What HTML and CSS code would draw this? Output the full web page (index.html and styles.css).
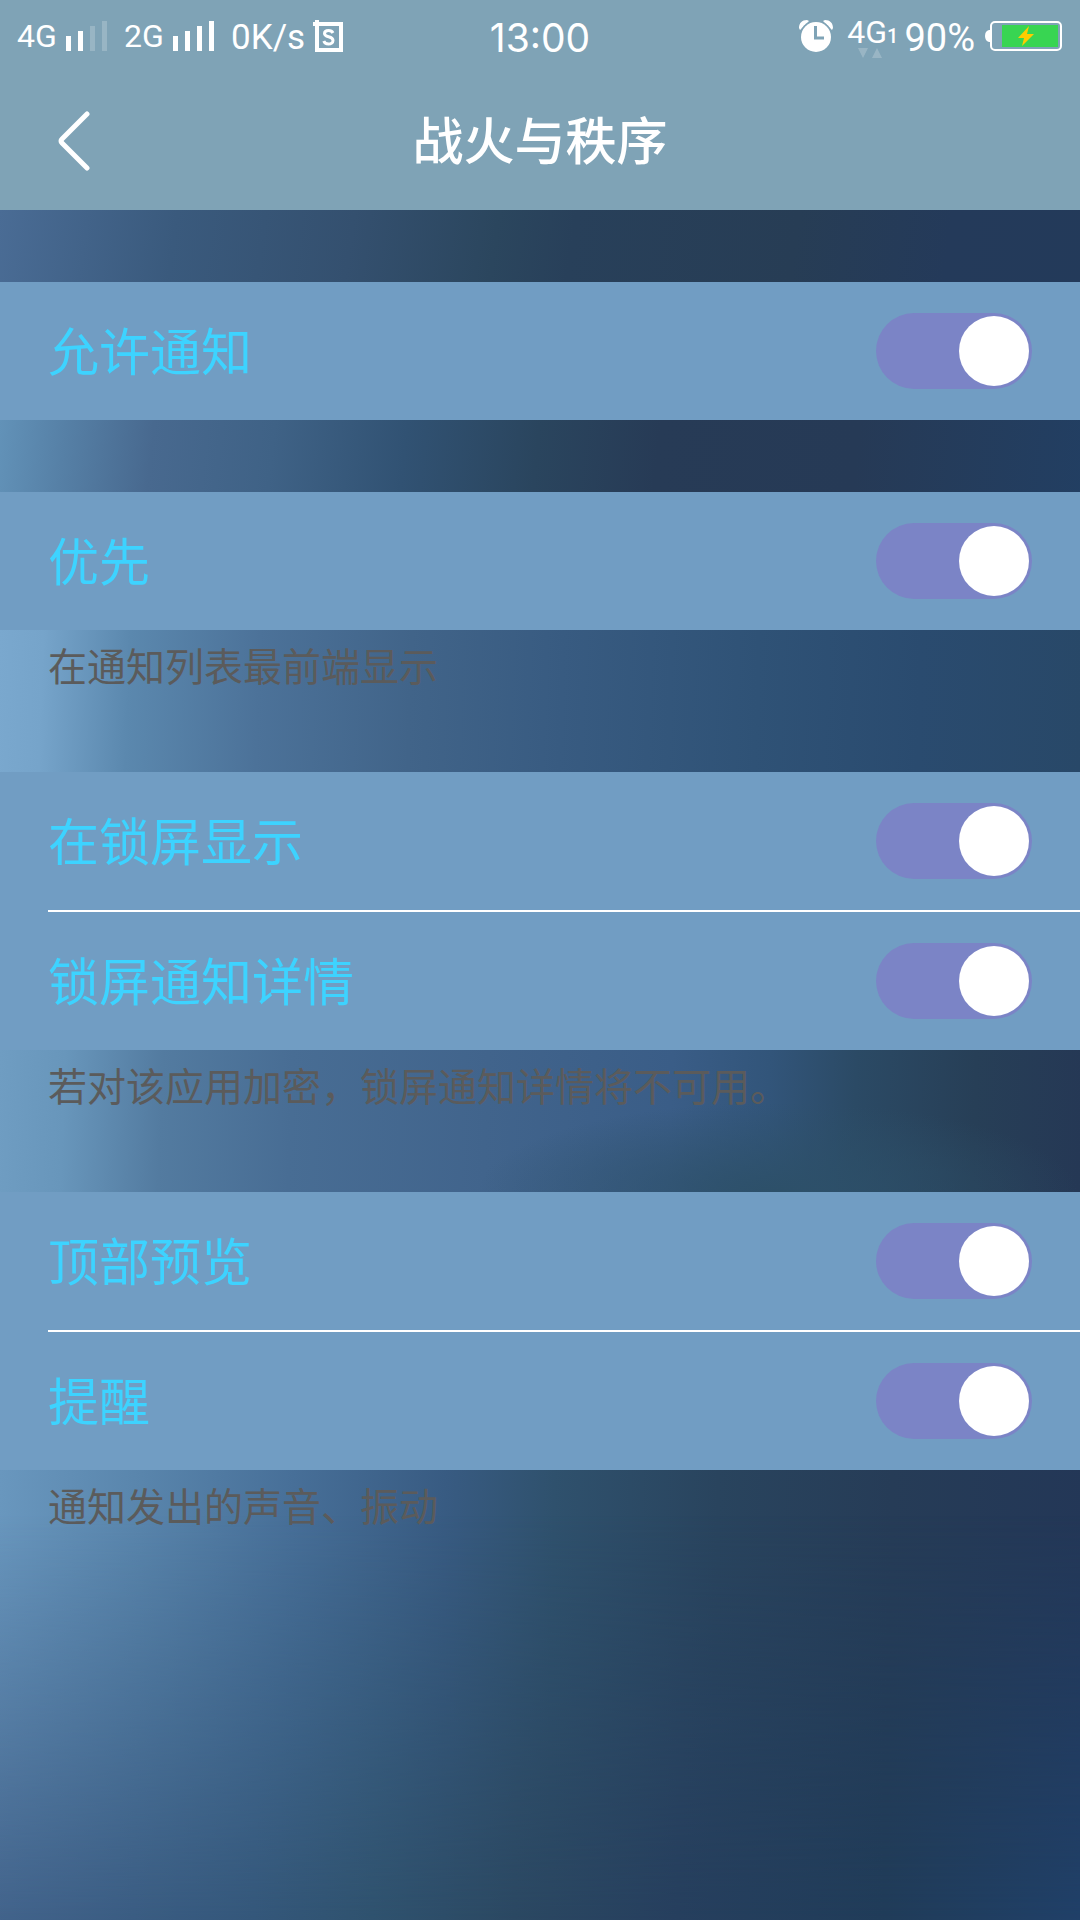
FILE: index.html
```html
<!DOCTYPE html>
<html lang="zh-CN">
<head>
  <meta charset="utf-8">
  <meta name="viewport" content="width=device-width">
  <title>战火与秩序</title>
  <link rel="stylesheet" href="styles.css">
</head>
<body>
  <header class="header">
    <div class="status">
      <div class="status-left">
        <span class="net">4G</span>
        <svg class="bars" width="42" height="30" viewBox="0 0 42 30" fill="#fff">
          <path d="M0 15h5v15H0zM12 10h5v20h-5z"/>
          <path d="M24 5h5v25h-5zM36 0h5v30h-5z" opacity=".2"/>
        </svg>
        <span class="net">2G</span>
        <svg class="bars" width="42" height="30" viewBox="0 0 42 30" fill="#fff">
          <path d="M0 15h5v15H0zM12 10h5v20h-5zM24 5h5v25h-5zM36 0h5v30h-5z"/>
        </svg>
        <span class="speed">0K/s</span>
        <svg width="30" height="32" viewBox="0 0 30 32" fill="none" stroke="#fff">
          <path d="M4 0v4M0 4h28v26H4V4" stroke-width="4"/>
          <path d="M20 13c-1-2-3-2.500-4.500-2.500-2.500 0-4 1.300-4 3 0 4.500 8.500 2 8.500 7 0 2-2 3.500-4.500 3.500-2.200 0-4-1-4.700-3" stroke-width="3"/>
        </svg>
      </div>
      <time class="clock">13:00</time>
      <div class="status-right">
        <svg width="34" height="32" viewBox="0 0 34 32">
          <path d="M0 8C0 3 3 0 8 0l2 1-9 9zM34 8c0-5-3-8-8-8l-2 1 9 9z" fill="#fff"/>
          <circle cx="17" cy="17" r="16.500" fill="#7fa3b6"/>
          <circle cx="17" cy="17" r="15" fill="#fff"/>
          <path d="M16.500 6v12H25" fill="none" stroke="#7fa3b6" stroke-width="3"/>
        </svg>
        <div class="data">
          <span class="net">4G</span><span class="sim">1</span>
          <svg class="arrows" width="24" height="10" viewBox="0 0 24 10" fill="#fff" opacity=".2">
            <path d="M0 0h10L5 10zM14 10h10L19 0z"/>
          </svg>
        </div>
        <span class="percent">90%</span>
        <svg width="78" height="30" viewBox="0 0 78 30">
          <path d="M5 9v12H4q-4-1-4-6t4-6z" fill="#fff"/>
          <rect x="6" y="1" width="70" height="28" rx="4" fill="none" stroke="#fff" stroke-width="2"/>
          <path d="M17 4h56v22H17z" fill="#38d552"/>
          <path d="M44 5L33 17h6l-2 8 12-12h-7z" fill="#fc0"/>
        </svg>
      </div>
    </div>
    <div class="titlebar">
      <button class="back" type="button" aria-label="返回">
        <svg width="32" height="60" viewBox="0 0 32 60" fill="none" stroke="#fff" stroke-width="5" stroke-linecap="round">
          <path d="M29 3L4 28q-2 2 0 4l25 25"/>
        </svg>
      </button>
      <h1>战火与秩序</h1>
    </div>
  </header>

  <main class="settings">
    <section class="group group-allow">
      <div class="row">
        <label for="allow">允许通知</label>
        <input class="switch" type="checkbox" id="allow" checked>
      </div>
    </section>

    <section class="group group-priority">
      <div class="row">
        <label for="priority">优先</label>
        <input class="switch" type="checkbox" id="priority" checked>
      </div>
    </section>
    <p class="note note-priority">在通知列表最前端显示</p>

    <section class="group">
      <div class="row">
        <label for="lock">在锁屏显示</label>
        <input class="switch" type="checkbox" id="lock" checked>
      </div>
      <div class="row">
        <label for="detail">锁屏通知详情</label>
        <input class="switch" type="checkbox" id="detail" checked>
      </div>
    </section>
    <p class="note note-lock">若对该应用加密，锁屏通知详情将不可用。</p>

    <section class="group">
      <div class="row">
        <label for="preview">顶部预览</label>
        <input class="switch" type="checkbox" id="preview" checked>
      </div>
      <div class="row">
        <label for="remind">提醒</label>
        <input class="switch" type="checkbox" id="remind" checked>
      </div>
    </section>
    <p class="note note-remind">通知发出的声音、振动</p>
  </main>
</body>
</html>
```

FILE: styles.css
```css
* {
  box-sizing: border-box;
}
body {
  display: flex;
  flex-direction: column;
  min-height: 100vh;
  margin: 0;
  background: #2a4664;
  font-family: Roboto, "Noto Sans CJK SC", sans-serif;
}
svg {
  display: block;
  flex: none;
}

/* header */
.header {
  background: #7fa3b6;
  color: #fff;
}
.status {
  display: grid;
  grid-template-columns: 1fr auto 1fr;
  align-items: center;
  height: 72px;
  padding: 0 17px;
}
.status-left,
.status-right {
  display: flex;
  align-items: center;
}
.status-right {
  justify-content: flex-end;
}
.net {
  font-size: 32px;
  line-height: 40px;
}
.status-left .net {
  width: 49px;
}
.bars {
  margin-right: 16px;
}
.speed {
  margin-right: 8px;
  padding-top: 3px;
  font-size: 35px;
}
.clock {
  padding-top: 3px;
  font-family: Inter, sans-serif;
  font-size: 39px;
}
.data {
  position: relative;
  margin: 0 6px 8px 14px;
  white-space: nowrap;
}
.sim {
  font-size: 20px;
  font-weight: 500;
}
.arrows {
  position: absolute;
  top: 36px;
  left: 11px;
}
.percent {
  margin-right: 10px;
  padding-top: 3px;
  font-size: 38px;
}
.titlebar {
  display: grid;
  grid-template-columns: 1fr auto 1fr;
  align-items: center;
  height: 138px;
  padding: 0 58px;
}
.back {
  justify-self: start;
  padding: 0;
  border: 0;
  background: none;
}
h1 {
  margin: 0;
  padding-top: 4px;
  font-size: 51px;
  font-weight: 500;
  line-height: 60px;
}

/* settings list */
.settings {
  display: flex;
  flex: 1;
  flex-direction: column;
}
.group {
  background: #719dc3;
}
.group-allow,
.group-priority {
  padding-top: 72px;
}
.group-allow {
  background: linear-gradient(#719dc3, #719dc3) 0 72px no-repeat,
    linear-gradient(98deg, #4a6c95, #3a5a7d 16%, #34506f 32%, #2b465e 45%, #28405a 52%, #273d55 72%, #243a5a 86%, #233a5a);
}
.group-priority {
  background: linear-gradient(#719dc3, #719dc3) 0 72px no-repeat,
    linear-gradient(96deg, #6292b8, #5680a6 6%, #48698f 14%, #3f6286 25%, #315273 37%, #2a455e 49%, #273b56 60%, #263a56 78%, #223f63);
}
.row {
  display: flex;
  align-items: center;
  justify-content: space-between;
  height: 138px;
  margin-left: 48px;
  padding-right: 48px;
}
.row + .row {
  height: 140px;
  border-top: 2px solid #fff;
}
.row label {
  padding-top: 6px;
  color: #3dd3ff;
  font-size: 51px;
  line-height: 60px;
}
.switch {
  display: flex;
  justify-content: flex-start;
  width: 156px;
  height: 76px;
  margin: 0;
  padding: 3px;
  border-radius: 38px;
  background: #7b84c6;
  appearance: none;
}
.switch::before {
  content: "";
  width: 70px;
  height: 70px;
  border-radius: 50%;
  background: #fff;
}
.switch:checked {
  justify-content: flex-end;
}

.note {
  min-height: 142px;
  margin: 0;
  padding: 13px 48px;
  color: #5b5b5b;
  font-size: 39px;
  line-height: 50px;
}
.note-priority {
  background: linear-gradient(92deg, #7aa8ce, #76a4ca 4%, #5b88ae 12%, #4c7299 24%, #416489 38%, #385b81 52%, #2f5276 70%, #2a4b6f 85%, #284868);
}
.note-lock {
  background: radial-gradient(ellipse 300px 90px at 72% 100%, #2d5069, transparent),
    linear-gradient(92deg, #6f9dc2, #6896bb 6%, #537ba0 15%, #486d94 27%, #41648c 45%, #3a5d87 62%, #32557a 71%, #2b4a65 79%, #273f57 90%, #253855);
}
.note-remind {
  position: relative;
  z-index: 0;
  flex: 1;
  background: linear-gradient(91deg, #6997be, #5985ac 13%, #476f98 27%, #385b82 41%, #2f516d 51%, #29445e 66%, #263c57 82%, #233757);
}
/* wallpaper gets darker and bluer towards the bottom */
.note-remind::before {
  content: "";
  position: absolute;
  inset: 0;
  z-index: -1;
  background: linear-gradient(91deg, #42638b, #3a5c82 13%, #34577a 24%, #2f526e 35%, #2b4862 48%, #263f5e 63%, #203c59 82%, #204068);
  -webkit-mask-image: linear-gradient(transparent 10%, #000);
  mask-image: linear-gradient(transparent 10%, #000);
}
```
